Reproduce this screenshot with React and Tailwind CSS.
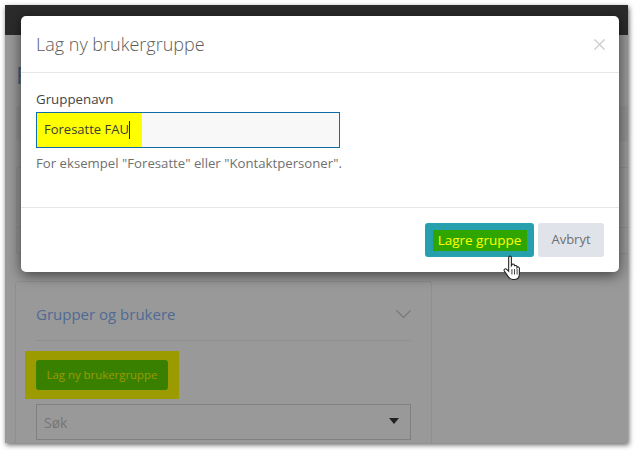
import React from 'react';
import { X } from 'lucide-react';

const font = { fontFamily: '"Open Sans", sans-serif' };

function Backdrop() {
  return (
    <div className="flex flex-col h-full bg-[#999999]">
      <div className="h-[30px] shrink-0 bg-[#2b2b2b]" />
      <div className="flex-1 flex flex-col pl-[11px]">
        <div className="h-[71px] shrink-0 pt-[25px] text-[24px] leading-[30px] text-[#47607f]">Foresatte</div>
        <div className="h-[35px] shrink-0 bg-[#939393] rounded-l-[3px]" />
        <div className="mt-[26px] h-[87px] shrink-0 border border-r-0 border-[#8f8f8f] rounded-l-[3px] flex flex-col justify-end">
          <div className="h-[26px] border-t border-[#8f8f8f]" />
        </div>
        <div className="mt-[27px] -ml-px w-[417px] h-[170px] border border-[#8f8f8f] rounded-t-[3px] px-5 pt-5">
          <div className="flex items-center justify-between h-[25px] text-[#4f6a94] text-[15px] leading-[24px]">
            <span className="-mt-[2px]">Grupper og brukere</span>
            <svg width="15" height="9" viewBox="0 0 15 9" fill="none" stroke="#777777" strokeWidth="1.1">
              <path d="M0.5 0.5 7.5 7.5 14.5 0.5" />
            </svg>
          </div>
          <div className="mt-[13px] border-t border-[#8f8f8f]" />
          <div className="mt-[10px] -ml-[11px] w-[154px] h-[48px] bg-[#9b9b00] flex items-center pl-[11px]">
            <div className="w-[132px] h-[30px] rounded-[3px] bg-[#3a8000] text-[#9b9b00] text-[11.4px] flex items-center justify-center">
              Lag ny brukergruppe
            </div>
          </div>
          <div className="mt-[5px] h-[36px] border border-[#808080] flex items-center justify-between pl-[7px] pr-[11px] text-[#757575] text-[14px]">
            <span>Søk</span>
            <span className="w-0 h-0 border-x-[5px] border-x-transparent border-t-[6px] border-t-[#222222] -mt-[2px]" />
          </div>
        </div>
      </div>
    </div>
  );
}

function Modal() {
  return (
    <div className="absolute left-[16px] top-[11px] w-[598px] h-[256px] bg-white rounded-[5px] shadow-[0_3px_14px_rgba(0,0,0,0.6)] flex flex-col">
      <div className="h-[57px] shrink-0 flex items-center justify-between pl-[15px] pr-[10px] border-b border-[#e6e6e6]">
        <h2 className="text-[18px] font-light text-[#5c5c5c]">Lag ny brukergruppe</h2>
        <X className="w-[19px] h-[19px] text-[#cccccc]" strokeWidth={1.5} />
      </div>
      <div className="h-[135px] shrink-0 pl-[15px] pt-[16px] border-b border-[#e6e6e6]">
        <div className="text-[13.3px] leading-[20px] text-[#444444]">Gruppenavn</div>
        <div className="mt-[3px] w-[304px] h-[36px] border border-[#0f6ca6] bg-[#f8f8f8] flex">
          <div className="w-[105px] bg-[#ffff00] flex items-center pl-[7px] text-[13px] text-[#3c3c3c]">
            <span>Foresatte FAU</span>
            <span className="w-px h-[18px] bg-[#222222]" />
          </div>
        </div>
        <p className="mt-[5px] text-[13.2px] leading-[20px] text-[#707070]">For eksempel "Foresatte" eller "Kontaktpersoner".</p>
      </div>
      <div className="flex-1 flex justify-end items-start gap-1 pt-[15px] pr-[15px] relative">
        <div className="w-[109px] h-[34px] rounded-[3px] bg-[#26a0ad] flex items-center justify-center">
          <span className="w-[94px] h-[21px] bg-[#2fa500] text-[#ffff00] text-[13.5px] font-medium flex items-center justify-center">Lagre gruppe</span>
        </div>
        <div className="w-[66px] h-[34px] rounded-[3px] bg-[#e0e4ea] text-[#6f6f6f] text-[13px] flex items-center justify-center">Avbryt</div>
        <svg className="absolute left-[481px] top-[47px]" width="22" height="26" viewBox="0 0 20 24">
          <path d="M6 2.2c0-1.6 2.5-1.6 2.5 0v7.6l.5-.9c.5-1 2.2-.8 2.3.5v.9c.4-1 2.3-.9 2.4.4v.8c.5-.9 2.2-.6 2.2.7v5.2c0 2.8-1.5 5.2-4.2 5.2H9.6c-1.9 0-3-1-3.9-2.4L2 14.8c-.9-1.5 1-2.8 2.2-1.5L6 15z" fill="#fff" stroke="#222" strokeWidth="1" />
          <path d="M9 13v5M11.4 13v5M13.8 13v5" stroke="#222" strokeWidth="0.8" />
        </svg>
      </div>
    </div>
  );
}

export default function App() {
  return (
    <div className="w-[637px] h-[452px] bg-white pl-[5px] pt-[5px]" style={font}>
      <div className="relative w-[623px] h-[438px] shadow-[1px_2px_5px_rgba(0,0,0,0.6)]">
        <div className="h-full overflow-hidden">
          <Backdrop />
        </div>
        <Modal />
      </div>
    </div>
  );
}
